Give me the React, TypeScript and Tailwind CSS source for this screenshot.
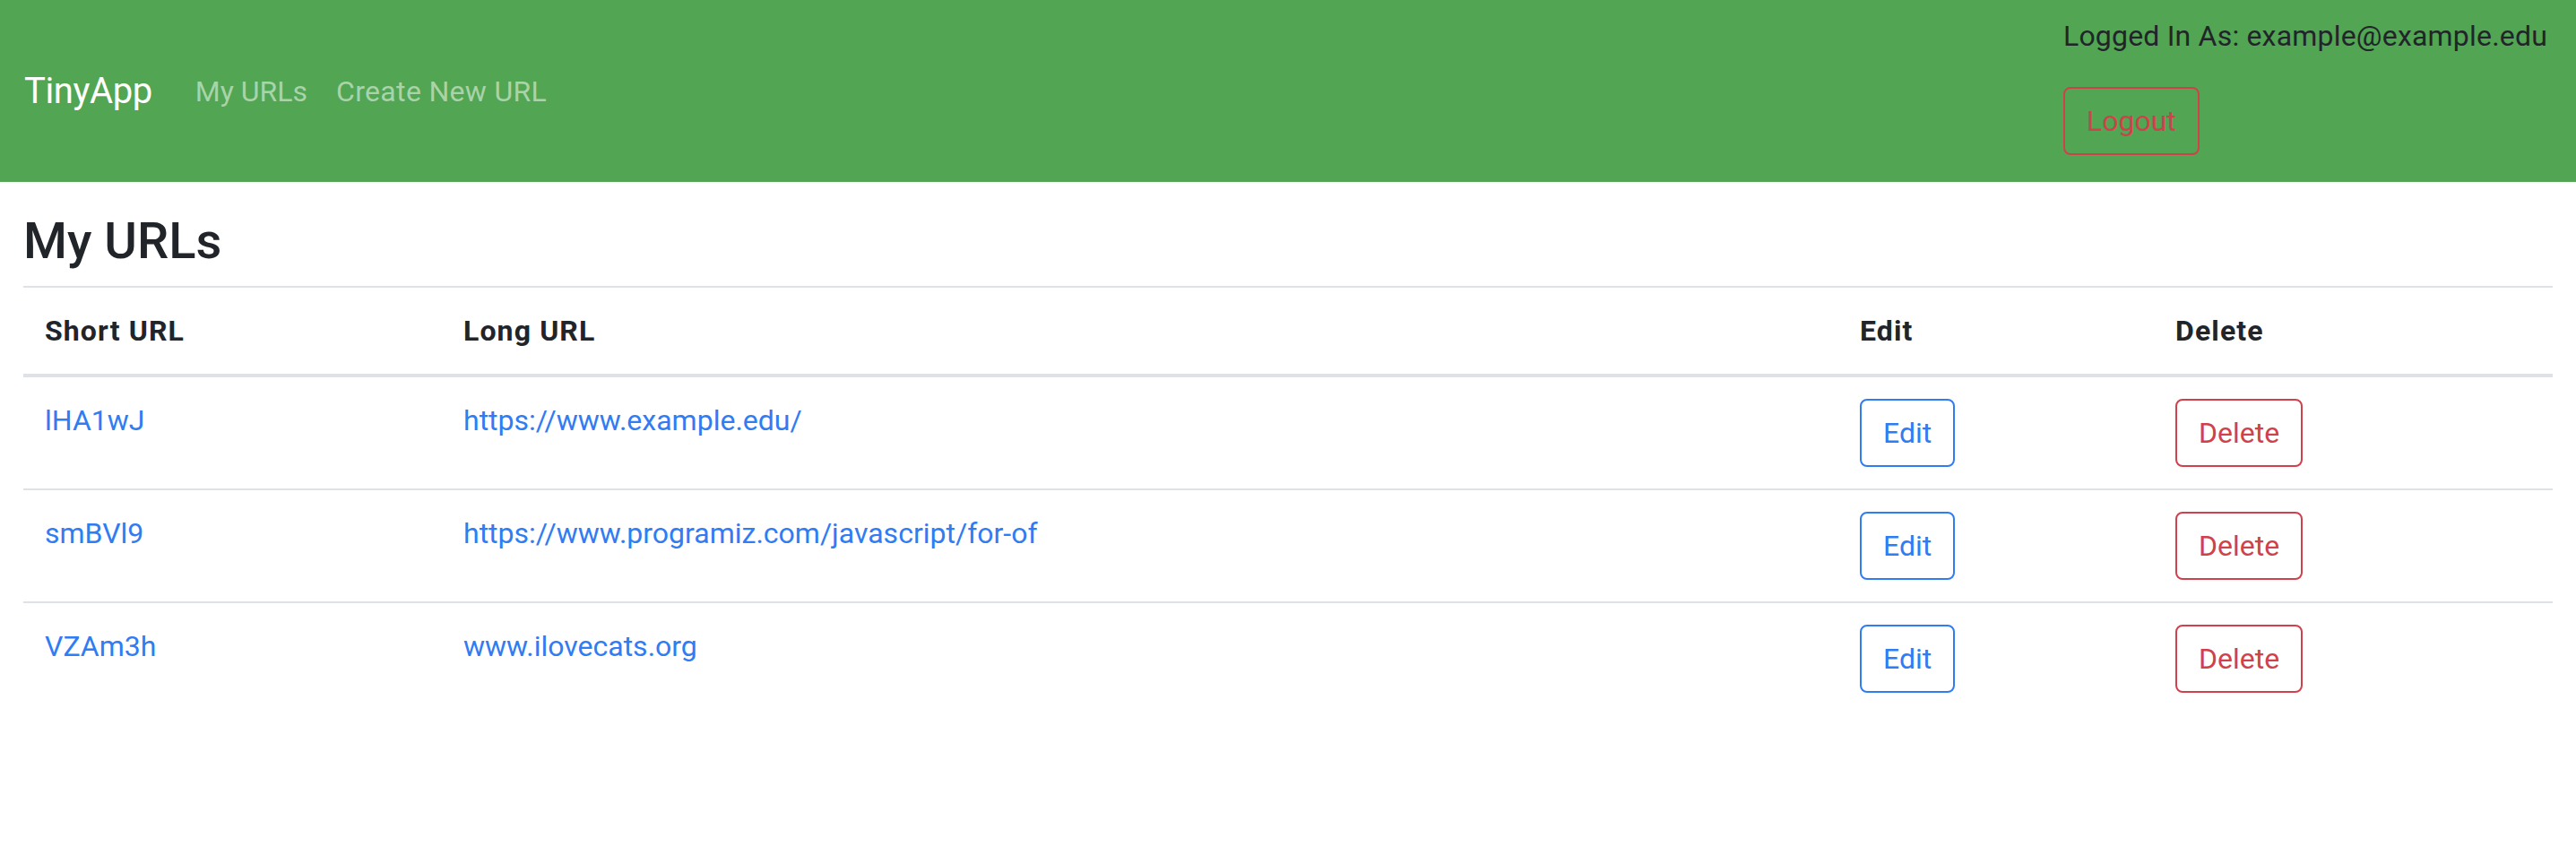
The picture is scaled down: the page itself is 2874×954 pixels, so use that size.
import * as React from "react";

type UrlRow = {
  short: string;
  long: string;
};

const urls: UrlRow[] = [
  { short: "lHA1wJ", long: "https://www.example.edu/" },
  { short: "smBVl9", long: "https://www.programiz.com/javascript/for-of" },
  { short: "VZAm3h", long: "www.ilovecats.org" },
];

function Navbar() {
  return (
    <nav className="flex h-[203px] items-start justify-between bg-[#52a552] pl-[27px] pr-[32px]">
      <div className="flex h-full items-center">
        <a className="mr-[32px] text-[40px] leading-[60px] tracking-[-0.01em] text-white">TinyApp</a>
        <a className="px-[16px] text-[32px] leading-[48px] text-[#a9d3a9]">My URLs</a>
        <a className="px-[16px] text-[32px] leading-[48px] tracking-[0.01em] text-[#a9d3a9]">Create New URL</a>
      </div>
      <div className="pt-[16px]">
        <p className="mb-[33px] text-[32px] leading-[48px] tracking-[0.006em] text-[#212529]">
          Logged In As: example@example.edu
        </p>
        <button className="h-[76px] rounded-[8px] border-2 border-[#d0414b] px-[24px] text-[32px] leading-[48px] text-[#d0414b]">
          Logout
        </button>
      </div>
    </nav>
  );
}

export default function App() {
  return (
    <div className="min-h-screen bg-white font-['Roboto','Liberation_Sans',sans-serif] text-[#212529]">
      <Navbar />

      <main className="px-[26px]">
        <h3 className="mb-[16px] mt-[33px] text-[56px] font-medium leading-[67px]">My URLs</h3>

        {/* URL table */}
        <table className="w-full table-fixed border-separate border-spacing-0 text-left text-[32px] leading-[48px]">
          <thead>
            <tr>
              <th className="w-[467px] border-b-4 border-t-2 border-[#dee2e6] p-[24px] font-bold tracking-[0.035em]">Short URL</th>
              <th className="w-[1558px] border-b-4 border-t-2 border-[#dee2e6] p-[24px] font-bold tracking-[0.035em]">Long URL</th>
              <th className="w-[352px] border-b-4 border-t-2 border-[#dee2e6] p-[24px] font-bold tracking-[0.035em]">Edit</th>
              <th className="border-b-4 border-t-2 border-[#dee2e6] p-[24px] font-bold tracking-[0.035em]">Delete</th>
            </tr>
          </thead>
          <tbody>
            {urls.map((row, index) => {
              const border = index === 0 ? "" : "border-t-2 border-[#dee2e6]";
              return (
                <tr key={row.short}>
                  <td className={`${border} p-[24px] align-top`}>
                    <a className="text-[#2f7cf3]">{row.short}</a>
                  </td>
                  <td className={`${border} p-[24px] align-top`}>
                    <a className="text-[#2f7cf3]">{row.long}</a>
                  </td>
                  <td className={`${border} p-[24px] align-top`}>
                    <button className="h-[76px] rounded-[8px] border-2 border-[#2f7cf3] px-[24px] text-[32px] leading-[48px] text-[#2f7cf3]">
                      Edit
                    </button>
                  </td>
                  <td className={`${border} p-[24px] align-top`}>
                    <button className="h-[76px] rounded-[8px] border-2 border-[#d0414b] px-[24px] text-[32px] leading-[48px] text-[#d0414b]">
                      Delete
                    </button>
                  </td>
                </tr>
              );
            })}
          </tbody>
        </table>
      </main>
    </div>
  );
}
